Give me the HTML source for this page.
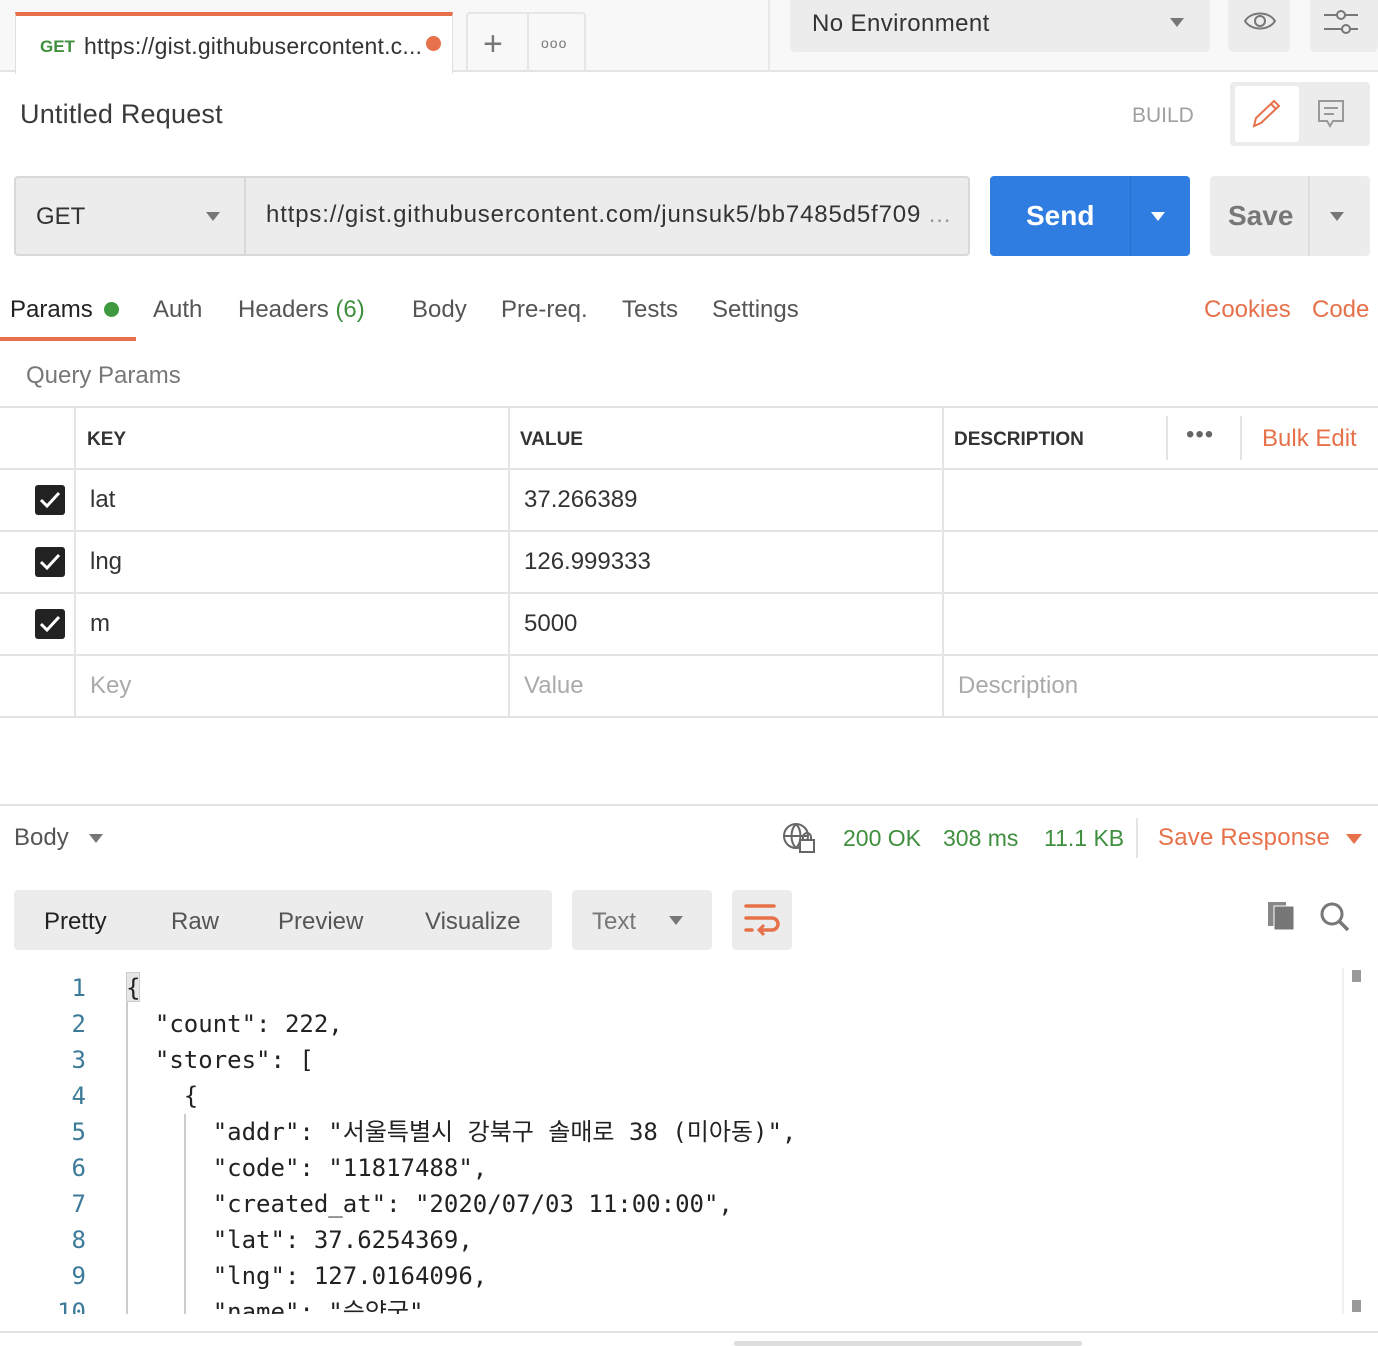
<!DOCTYPE html>
<html><head><meta charset="utf-8"><style>
*{box-sizing:border-box;margin:0;padding:0}
body{width:1378px;height:1346px;position:relative;background:#fff;font-family:"Liberation Sans","Noto Sans CJK KR",sans-serif;color:#333;overflow:hidden}
.a{position:absolute}
.t{position:absolute;white-space:nowrap}
.code{font-family:"DejaVu Sans Mono","Noto Sans CJK KR",monospace;font-size:24px;color:#222}
.ln{font-family:"DejaVu Sans Mono",monospace;font-size:24px;color:#3c7a9a;text-align:right;width:86px}
.tri{width:0;height:0;border-left:7px solid transparent;border-right:7px solid transparent;border-top:9px solid #777}
</style></head><body>
<div class="a" style="left:0;top:0;width:1378px;height:72px;background:#f8f8f8;border-bottom:2px solid #e4e4e4"></div>
<div class="a" style="left:15px;top:12px;width:438px;height:62px;background:#fff;border-top:4px solid #e6714a;border-left:1px solid #e0e0e0;border-right:1px solid #e0e0e0"></div>
<div class="t" style="left:40px;top:37px;font-size:17px;font-weight:bold;color:#3f8f3f">GET</div>
<div class="t" style="left:84px;top:33px;font-size:23px;color:#333;letter-spacing:0.2px">https://gist.githubusercontent.c...</div>
<div class="a" style="left:426px;top:36px;width:15px;height:15px;border-radius:50%;background:#e6714a"></div>
<div class="a" style="left:466px;top:12px;width:120px;height:60px;border:2px solid #e6e6e6;border-bottom:none;border-radius:4px 4px 0 0"></div>
<div class="a" style="left:527px;top:12px;width:2px;height:60px;background:#e6e6e6"></div>
<div class="t" style="left:483px;top:25px;font-size:34px;color:#777;font-weight:300">+</div>
<div class="t" style="left:541px;top:35px;font-size:14px;color:#777;letter-spacing:1px">ooo</div>
<div class="a" style="left:768px;top:0;width:2px;height:72px;background:#e8e8e8"></div>
<div class="a" style="left:790px;top:0;width:420px;height:52px;background:#ececec;border-radius:0 0 5px 5px"></div>
<div class="t" style="left:812px;top:10px;font-size:24px;color:#333;letter-spacing:0.4px">No Environment</div>
<div class="a tri" style="left:1170px;top:18px"></div>
<div class="a" style="left:1228px;top:0;width:62px;height:52px;background:#ececec;border-radius:0 0 5px 5px"></div>
<svg class="a" style="left:1242px;top:8px" width="36" height="26" viewBox="0 0 36 26"><path d="M3 13 C9 3 27 3 33 13 C27 23 9 23 3 13Z" fill="none" stroke="#777" stroke-width="2"/><circle cx="18" cy="13" r="5" fill="none" stroke="#777" stroke-width="2"/></svg>
<div class="a" style="left:1310px;top:0;width:68px;height:52px;background:#ececec;border-radius:0 0 5px 5px"></div>
<svg class="a" style="left:1322px;top:6px" width="36" height="30"><path d="M2 9h34M2 23h34" stroke="#777" stroke-width="2"/><circle cx="19" cy="9" r="4" fill="#ececec" stroke="#777" stroke-width="2"/><circle cx="24" cy="23" r="4" fill="#ececec" stroke="#777" stroke-width="2"/></svg>
<div class="t" style="left:20px;top:99px;font-size:27px;color:#3a3a3a;letter-spacing:0.2px">Untitled Request</div>
<div class="t" style="left:1132px;top:104px;font-size:21px;color:#a0a0a0">BUILD</div>
<div class="a" style="left:1230px;top:82px;width:140px;height:64px;background:#ececec;border-radius:4px"></div>
<div class="a" style="left:1235px;top:86px;width:64px;height:56px;background:#fff;border-radius:3px"></div>
<svg class="a" style="left:1250px;top:98px" width="32" height="32"><path d="M4 28 L6 20 L24 3 L29 8 L11 25 Z M21 6 L26 11" fill="none" stroke="#e6714a" stroke-width="2"/></svg>
<svg class="a" style="left:1316px;top:98px" width="32" height="32"><path d="M3 3h24v20H17l-3 5-3-5H3Z M8 10h14M8 16h10" fill="none" stroke="#999" stroke-width="2"/></svg>
<div class="a" style="left:14px;top:176px;width:956px;height:80px;background:#ececec;border:2px solid #d8d8d8;border-radius:4px"></div>
<div class="a" style="left:244px;top:178px;width:2px;height:76px;background:#d8d8d8"></div>
<div class="t" style="left:36px;top:203px;font-size:24px;color:#333">GET</div>
<div class="a tri" style="left:206px;top:212px"></div>
<div class="t" style="left:266px;top:201px;font-size:24px;color:#333;letter-spacing:0.85px">https://gist.githubusercontent.com/junsuk5/bb7485d5f709 <span style="color:#999">...</span></div>
<div class="a" style="left:990px;top:176px;width:200px;height:80px;background:#307de1;border-radius:4px"></div>
<div class="a" style="left:1130px;top:176px;width:1px;height:80px;background:#2a6fc8"></div>
<div class="t" style="left:1026px;top:200px;font-size:28px;color:#fff;font-weight:bold">Send</div>
<div class="a" style="left:1151px;top:212px;width:0;height:0;border-left:7px solid transparent;border-right:7px solid transparent;border-top:9px solid #fff"></div>
<div class="a" style="left:1210px;top:176px;width:160px;height:80px;background:#ececec;border-radius:4px"></div>
<div class="a" style="left:1308px;top:176px;width:2px;height:80px;background:#ddd"></div>
<div class="t" style="left:1228px;top:200px;font-size:28px;color:#777;font-weight:bold">Save</div>
<div class="a tri" style="left:1330px;top:212px"></div>
<div class="t" style="left:10px;top:296px;font-size:24px;color:#222">Params</div>
<div class="a" style="left:104px;top:302px;width:15px;height:15px;border-radius:50%;background:#3f9a3f"></div>
<div class="a" style="left:0;top:337px;width:136px;height:4px;background:#e6714a"></div>
<div class="t" style="left:153px;top:296px;font-size:24px;color:#555">Auth</div>
<div class="t" style="left:238px;top:296px;font-size:24px;color:#555">Headers <span style="color:#3f8f3f">(6)</span></div>
<div class="t" style="left:412px;top:296px;font-size:24px;color:#555">Body</div>
<div class="t" style="left:501px;top:296px;font-size:24px;color:#555">Pre-req.</div>
<div class="t" style="left:622px;top:296px;font-size:24px;color:#555">Tests</div>
<div class="t" style="left:712px;top:296px;font-size:24px;color:#555">Settings</div>
<div class="t" style="left:1204px;top:296px;font-size:24px;color:#e6714a">Cookies</div>
<div class="t" style="left:1312px;top:296px;font-size:24px;color:#e6714a">Code</div>
<div class="t" style="left:26px;top:362px;font-size:24px;color:#777">Query Params</div>
<div class="a" style="left:0;top:406px;width:1378px;height:312px;border-top:2px solid #e4e4e4"></div>
<div class="a" style="left:0;top:468px;width:1378px;height:2px;background:#e4e4e4"></div>
<div class="a" style="left:0;top:530px;width:1378px;height:2px;background:#e4e4e4"></div>
<div class="a" style="left:0;top:592px;width:1378px;height:2px;background:#e4e4e4"></div>
<div class="a" style="left:0;top:654px;width:1378px;height:2px;background:#e4e4e4"></div>
<div class="a" style="left:0;top:716px;width:1378px;height:2px;background:#e4e4e4"></div>
<div class="a" style="left:74px;top:408px;width:2px;height:310px;background:#e4e4e4"></div>
<div class="a" style="left:508px;top:408px;width:2px;height:310px;background:#e4e4e4"></div>
<div class="a" style="left:942px;top:408px;width:2px;height:310px;background:#e4e4e4"></div>
<div class="a" style="left:1166px;top:416px;width:2px;height:44px;background:#e4e4e4"></div>
<div class="a" style="left:1240px;top:416px;width:2px;height:44px;background:#e4e4e4"></div>
<div class="t" style="left:87px;top:429px;font-size:19px;font-weight:bold;color:#333">KEY</div>
<div class="t" style="left:520px;top:429px;font-size:19px;font-weight:bold;color:#333">VALUE</div>
<div class="t" style="left:954px;top:429px;font-size:19px;font-weight:bold;color:#333">DESCRIPTION</div>
<div class="t" style="left:1186px;top:421px;font-size:24px;color:#666;letter-spacing:1px">•••</div>
<div class="t" style="left:1262px;top:425px;font-size:24px;color:#e6714a">Bulk Edit</div>
<svg class="a" style="left:34px;top:484px" width="32" height="32"><rect x="1" y="1" width="30" height="30" rx="3" fill="#222"/><path d="M7 16l6 6 12-13" fill="none" stroke="#fff" stroke-width="3"/></svg>
<svg class="a" style="left:34px;top:546px" width="32" height="32"><rect x="1" y="1" width="30" height="30" rx="3" fill="#222"/><path d="M7 16l6 6 12-13" fill="none" stroke="#fff" stroke-width="3"/></svg>
<svg class="a" style="left:34px;top:608px" width="32" height="32"><rect x="1" y="1" width="30" height="30" rx="3" fill="#222"/><path d="M7 16l6 6 12-13" fill="none" stroke="#fff" stroke-width="3"/></svg>
<div class="t" style="left:90px;top:486px;font-size:24px;color:#333">lat</div>
<div class="t" style="left:524px;top:486px;font-size:24px;color:#333">37.266389</div>
<div class="t" style="left:90px;top:548px;font-size:24px;color:#333">lng</div>
<div class="t" style="left:524px;top:548px;font-size:24px;color:#333">126.999333</div>
<div class="t" style="left:90px;top:610px;font-size:24px;color:#333">m</div>
<div class="t" style="left:524px;top:610px;font-size:24px;color:#333">5000</div>
<div class="t" style="left:90px;top:672px;font-size:24px;color:#aaa">Key</div>
<div class="t" style="left:524px;top:672px;font-size:24px;color:#aaa">Value</div>
<div class="t" style="left:958px;top:672px;font-size:24px;color:#aaa">Description</div>
<div class="a" style="left:0;top:804px;width:1378px;height:2px;background:#e4e4e4"></div>
<div class="t" style="left:14px;top:824px;font-size:24px;color:#555">Body</div>
<div class="a tri" style="left:89px;top:834px"></div>
<svg class="a" style="left:782px;top:822px" width="36" height="32"><circle cx="14" cy="14" r="12" fill="none" stroke="#666" stroke-width="2"/><path d="M2 14h24M14 2c-6 6-6 18 0 24M14 2c6 6 6 18 0 24" fill="none" stroke="#666" stroke-width="2"/><rect x="18" y="18" width="14" height="12" fill="#fff" stroke="#666" stroke-width="2"/><path d="M21 18v-3a4 4 0 0 1 8 0v3" fill="none" stroke="#666" stroke-width="2"/></svg>
<div class="t" style="left:843px;top:825px;font-size:23px;color:#3f8f3f">200 OK</div>
<div class="t" style="left:943px;top:825px;font-size:23px;color:#3f8f3f">308 ms</div>
<div class="t" style="left:1044px;top:825px;font-size:23px;color:#3f8f3f">11.1 KB</div>
<div class="a" style="left:1136px;top:818px;width:2px;height:40px;background:#e4e4e4"></div>
<div class="t" style="left:1158px;top:824px;font-size:24px;color:#e6714a;letter-spacing:0.2px">Save Response</div>
<div class="a" style="left:1346px;top:834px;width:0;height:0;border-left:8px solid transparent;border-right:8px solid transparent;border-top:10px solid #e6714a"></div>
<div class="a" style="left:14px;top:890px;width:538px;height:60px;background:#ececec;border-radius:4px"></div>
<div class="t" style="left:44px;top:908px;font-size:24px;color:#222">Pretty</div>
<div class="t" style="left:171px;top:908px;font-size:24px;color:#555">Raw</div>
<div class="t" style="left:278px;top:908px;font-size:24px;color:#555">Preview</div>
<div class="t" style="left:425px;top:908px;font-size:24px;color:#555">Visualize</div>
<div class="a" style="left:572px;top:890px;width:140px;height:60px;background:#ececec;border-radius:4px"></div>
<div class="t" style="left:592px;top:908px;font-size:24px;color:#777">Text</div>
<div class="a tri" style="left:669px;top:916px"></div>
<div class="a" style="left:732px;top:890px;width:60px;height:60px;background:#ececec;border-radius:4px"></div>
<svg class="a" style="left:744px;top:902px" width="36" height="36"><path d="M2 4h28M2 16h26a6 6 0 0 1 0 12H16M2 28h6" fill="none" stroke="#e6714a" stroke-width="3.5" stroke-linecap="round"/><path d="M20 23l-5 5 5 5" fill="none" stroke="#e6714a" stroke-width="3"/></svg>
<svg class="a" style="left:1266px;top:900px" width="32" height="32"><rect x="2" y="2" width="18" height="24" fill="#888"/><rect x="8" y="6" width="20" height="24" fill="#777" stroke="#fff" stroke-width="1"/></svg>
<svg class="a" style="left:1318px;top:900px" width="34" height="34"><circle cx="14" cy="14" r="10" fill="none" stroke="#777" stroke-width="3"/><path d="M21 21l9 9" stroke="#777" stroke-width="3.5"/></svg>
<div class="a" style="left:0;top:968px;width:1378px;height:346px;overflow:hidden">
<div class="a" style="left:126px;top:4px;width:2px;height:342px;background:#ccc"></div>
<div class="a" style="left:184px;top:146px;width:2px;height:200px;background:#ccc"></div>
<div class="a" style="left:126px;top:4px;width:14px;height:30px;background:#e6e6e6;border:1px solid #ccc"></div>
<div class="a" style="left:1342px;top:0;width:2px;height:346px;background:#f0f0f0"></div>
<div class="a" style="left:1352px;top:2px;width:9px;height:12px;background:#999"></div>
<div class="a" style="left:1352px;top:332px;width:9px;height:12px;background:#999"></div>
<div class="a ln" style="left:0;top:2px;line-height:36px">1<br>2<br>3<br>4<br>5<br>6<br>7<br>8<br>9<br>10</div>
<pre class="a code" style="left:126px;top:2px;line-height:36px">{
  "count": 222,
  "stores": [
    {
      "addr": "서울특별시 강북구 솔매로 38 (미아동)",
      "code": "11817488",
      "created_at": "2020/07/03 11:00:00",
      "lat": 37.6254369,
      "lng": 127.0164096,
      "name": "승약국"</pre>
</div>
<div class="a" style="left:0;top:1331px;width:1378px;height:2px;background:#e4e4e4"></div>
<div class="a" style="left:734px;top:1341px;width:348px;height:5px;background:#ddd;border-radius:3px"></div>
</body></html>
